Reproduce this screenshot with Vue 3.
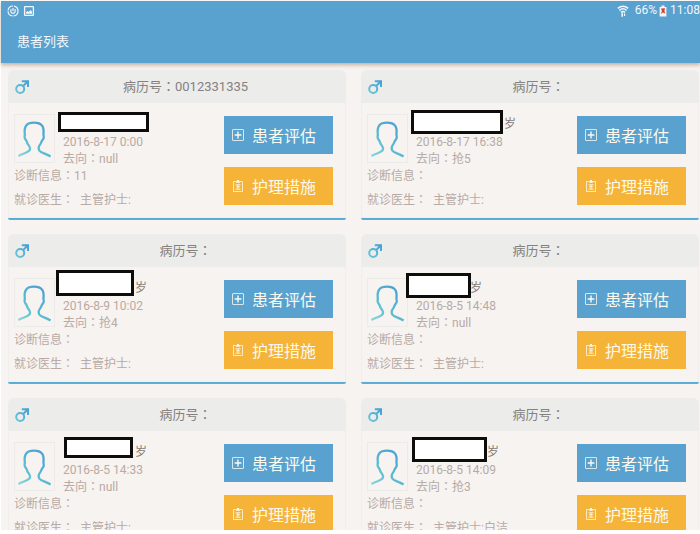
<script setup>
import { ref } from 'vue'

// name: ширина имени до возраста, mask: плашка поверх личных данных
const patients = ref([
    { id: 1, caseNo: '0012331335', time: '2016-8-17 0:00', place: 'null', diagnosis: '11', nurse: '', name: 72, age: '', mask: { left: 50, top: 42, width: 91, height: 20 } },
    { id: 2, caseNo: '', time: '2016-8-17 16:38', place: '抢5', diagnosis: '', nurse: '', name: 88, age: '岁', mask: { left: 50, top: 40, width: 92, height: 24 } },
    { id: 3, caseNo: '', time: '2016-8-9 10:02', place: '抢4', diagnosis: '', nurse: '', name: 72, age: '岁', mask: { left: 48, top: 36, width: 78, height: 26 } },
    { id: 4, caseNo: '', time: '2016-8-5 14:48', place: 'null', diagnosis: '', nurse: '', name: 54, age: '岁', mask: { left: 45, top: 39, width: 65, height: 25 } },
    { id: 5, caseNo: '', time: '2016-8-5 14:33', place: 'null', diagnosis: '', nurse: '', name: 72, age: '岁', mask: { left: 56, top: 39, width: 69, height: 21 } },
    { id: 6, caseNo: '', time: '2016-8-5 14:09', place: '抢3', diagnosis: '', nurse: '白洁', name: 71, age: '岁', mask: { left: 51, top: 39, width: 75, height: 25 } }
])

const maskStyle = (mask) => ({
    left: `${mask.left}px`,
    top: `${mask.top}px`,
    width: `${mask.width}px`,
    height: `${mask.height}px`
})
</script>

<template>
    <div class="screen">
        <header class="app-bar">
            <div class="status-bar">
                <svg class="status-icon" viewBox="0 0 12 12">
                    <circle cx="6" cy="6" r="5" fill="none" stroke="currentColor" stroke-width="1.2" stroke-dasharray="7 1" />
                    <path d="M4 4.2 Q3.2 8.4 6 8.4 Q8.8 8.4 8 4.2 M6 3 V6" fill="none" stroke="currentColor" stroke-width="1.2" />
                </svg>
                <svg class="status-icon picture-icon" viewBox="0 0 12 12">
                    <rect x="1.6" y="1.6" width="8.8" height="8.8" rx="0.6" fill="none" stroke="currentColor" stroke-width="1.3" />
                    <path d="M3 8.8 V7.2 L4.6 6 L5.8 7 L7.6 5 L9 6.8 V8.8 Z" fill="currentColor" />
                </svg>
                <div class="status-right">
                    <svg class="wifi-icon" viewBox="0 0 12 12">
                        <path d="M0.8 3.4 Q6 -1 11.2 3.4 M2.4 5.4 Q6 2.2 9.6 5.4 M4 7.4 Q6 5.6 8 7.4" fill="none" stroke="currentColor" stroke-width="1.5" />
                        <path d="M4.4 8.6 L6 7.4 V11.8 H4.4 Z M7 8.4 H8.2 V11 H7 Z" fill="currentColor" />
                    </svg>
                    <span>66%</span>
                    <svg class="battery-icon" viewBox="0 0 8 12">
                        <path d="M2.5 0.6 H5.5 V2 H7.4 V11.4 H0.6 V2 H2.5 Z" fill="#f3f6f8" />
                        <path d="M2 3.6 L6 3.2 L5.4 6 L6.4 8.6 L3.8 7.6 L1.6 9 L3 6 Z" fill="#d8402a" />
                    </svg>
                    <span>11:08</span>
                </div>
            </div>
            <h1 class="title">患者列表</h1>
        </header>

        <main class="patient-list">
            <article v-for="patient in patients" :key="patient.id" class="card">
                <div class="card-header">
                    <svg class="gender-icon" viewBox="0 0 14 14">
                        <defs>
                            <linearGradient :id="`gender-${patient.id}`" gradientUnits="userSpaceOnUse" x1="1" y1="13" x2="13" y2="1">
                                <stop offset="0" stop-color="#6cc6d6" />
                                <stop offset="1" stop-color="#459fd6" />
                            </linearGradient>
                        </defs>
                        <g fill="none" :stroke="`url(#gender-${patient.id})`" stroke-width="2">
                            <circle cx="5.2" cy="9" r="4" />
                            <path d="M8 6.2 L12.4 1.8 M6.8 1.2 H13 V7" />
                        </g>
                    </svg>
                    <h2 class="case-no">病历号<span class="colon">：</span>{{ patient.caseNo }}</h2>
                </div>

                <div class="card-body">
                    <div class="details">
                        <div class="summary">
                            <svg class="avatar" viewBox="0 0 39 47">
                                <defs>
                                    <linearGradient :id="`avatar-${patient.id}`" gradientUnits="userSpaceOnUse" x1="3" y1="41" x2="31" y2="9">
                                        <stop offset="0" stop-color="#8fd5dc" />
                                        <stop offset="0.4" stop-color="#5cbdd3" />
                                        <stop offset="1" stop-color="#4a9fd4" />
                                    </linearGradient>
                                </defs>
                                <path
                                    d="M3.4 41 C8 38.4 12.6 37.8 14.4 35.6 C16.2 33.2 14.6 31.4 13 29.4 C11.8 27.8 12.2 26 10.4 24.4 C8.8 22.8 9.8 21.2 9.8 19.4 C8.8 11.2 11.6 7.6 19 7.6 C27 7.6 29.4 11.6 28.4 19.4 C28.6 21 29.6 22.6 28 24.4 C26.2 26.2 26.4 27.8 25.2 29.4 C23.6 31.4 23 33.4 24.4 35.6 C26.2 38.2 30.8 38.4 35.6 41.4"
                                    fill="none"
                                    :stroke="`url(#avatar-${patient.id})`"
                                    stroke-width="2.3"
                                    stroke-linejoin="round"
                                />
                            </svg>
                            <div class="info">
                                <p class="name">
                                    <span class="name-space" :style="{ width: `${patient.name}px` }"></span>{{ patient.age }}
                                </p>
                                <p>{{ patient.time }}</p>
                                <p>去向<span class="colon">：</span>{{ patient.place }}</p>
                            </div>
                        </div>
                        <p>诊断信息<span class="colon">：</span>{{ patient.diagnosis }}</p>
                        <p class="staff">
                            <span>就诊医生<span class="colon">：</span></span>
                            <span>主管护士:{{ patient.nurse }}</span>
                        </p>
                    </div>

                    <div class="actions">
                        <button type="button" class="action-button assess">
                            <svg class="action-icon" viewBox="0 0 12 12">
                                <rect x="0.5" y="0.5" width="11" height="11" rx="0.5" fill="none" stroke="currentColor" stroke-width="0.8" />
                                <path d="M6 2.6 V9.4 M2.6 6 H9.4" stroke="currentColor" stroke-width="1.4" />
                            </svg>
                            患者评估
                        </button>
                        <button type="button" class="action-button nursing">
                            <svg class="action-icon" viewBox="0 0 12 12">
                                <path d="M4 1.5 H1.5 V11.5 H10.5 V1.5 H8" fill="none" stroke="currentColor" stroke-width="0.8" />
                                <path d="M4 2.8 V1.2 H5 V0 H7 V1.2 H8 V2.8 Z" fill="currentColor" />
                                <path d="M3.5 4.8 H8.5 M4 6.8 H8 M3.5 9.2 H8.5 M6 4.8 V9.2" fill="none" stroke="currentColor" stroke-width="0.9" />
                            </svg>
                            护理措施
                        </button>
                    </div>
                </div>

                <div class="mask" :style="maskStyle(patient.mask)"></div>
            </article>
        </main>
    </div>
</template>

<style>
body {
    background: #fff;
}
</style>

<style scoped>
.screen {
    display: flex;
    flex-direction: column;
    height: 100vh;
    padding: 1px 0 4px 1px;
    box-sizing: border-box;
    overflow: hidden;
    font-family: Roboto, "Noto Sans CJK SC", sans-serif;
    font-size: 12px;
    line-height: 17px;
    color: #b8aaa5;
}

h1,
h2,
p {
    margin: 0;
    font-weight: 400;
}

.colon {
    font-family: "Noto Sans CJK TC", sans-serif;
    line-height: 0;
}

.app-bar {
    flex: none;
    position: relative;
    background: #59a2d0;
    color: #f1f7fb;
    box-shadow: 0 2px 4px rgba(110, 70, 50, 0.4);
}

.status-bar {
    display: flex;
    align-items: center;
    height: 19px;
    padding-left: 6px;
}

.status-icon {
    width: 12px;
    height: 12px;
}

.picture-icon {
    margin-left: 4px;
}

.status-right {
    display: flex;
    align-items: center;
    margin-left: auto;
}

.wifi-icon {
    width: 12px;
    height: 12px;
    margin-right: 6px;
}

.battery-icon {
    width: 8px;
    height: 12px;
    margin: 0 3px 0 2px;
}

.title {
    padding-left: 16px;
    font-size: 13px;
    line-height: 43px;
}

.patient-list {
    flex: 1;
    min-height: 0;
    display: grid;
    grid-template-columns: 1fr 1fr;
    align-content: start;
    gap: 14px 15px;
    padding: 7px 1px 0 7px;
    overflow: hidden;
    background: #f7f3f0;
}

.card {
    position: relative;
    border-bottom: 2px solid #5badd6;
    border-radius: 6px 6px 2px 2px;
    box-shadow: inset 0 0 0 1px #f1efec;
}

.card-header {
    display: flex;
    align-items: center;
    height: 33px;
    padding: 0 4px 0 7px;
    border-radius: 6px 6px 0 0;
    background: #ecedeb;
}

.gender-icon {
    flex: none;
    width: 14px;
    height: 14px;
}

.case-no {
    flex: 1;
    text-align: center;
    font-size: 13px;
    color: #858180;
}

.card-body {
    display: flex;
    padding: 11px 13px 9px 6px;
}

.details {
    flex: 1;
    min-width: 0;
}

.summary {
    display: flex;
    gap: 8px;
    height: 54px;
}

.avatar {
    flex: none;
    width: 41px;
    height: 49px;
    box-sizing: border-box;
    border: 1px solid #ebebe9;
}

.name {
    display: flex;
    height: 20px;
    line-height: 20px;
    color: #857a75;
}

.name-space {
    flex: none;
}

.staff {
    display: flex;
    gap: 6px;
    margin-top: 7px;
    white-space: nowrap;
}

.actions {
    flex: none;
    display: flex;
    flex-direction: column;
    gap: 13px;
    padding-top: 2px;
}

.action-button {
    display: flex;
    align-items: center;
    gap: 8px;
    width: 109px;
    height: 38px;
    padding: 0 0 0 8px;
    border: none;
    font-family: inherit;
    font-size: 16px;
    white-space: nowrap;
    color: #fbf9ee;
    cursor: pointer;
}

.action-icon {
    flex: none;
    width: 12px;
    height: 12px;
}

.assess {
    background: #59a2d0;
}

.nursing {
    background: #f5b437;
}

.mask {
    position: absolute;
    box-sizing: border-box;
    border: 3px solid #0d0d0b;
    background: #fff;
}
</style>
